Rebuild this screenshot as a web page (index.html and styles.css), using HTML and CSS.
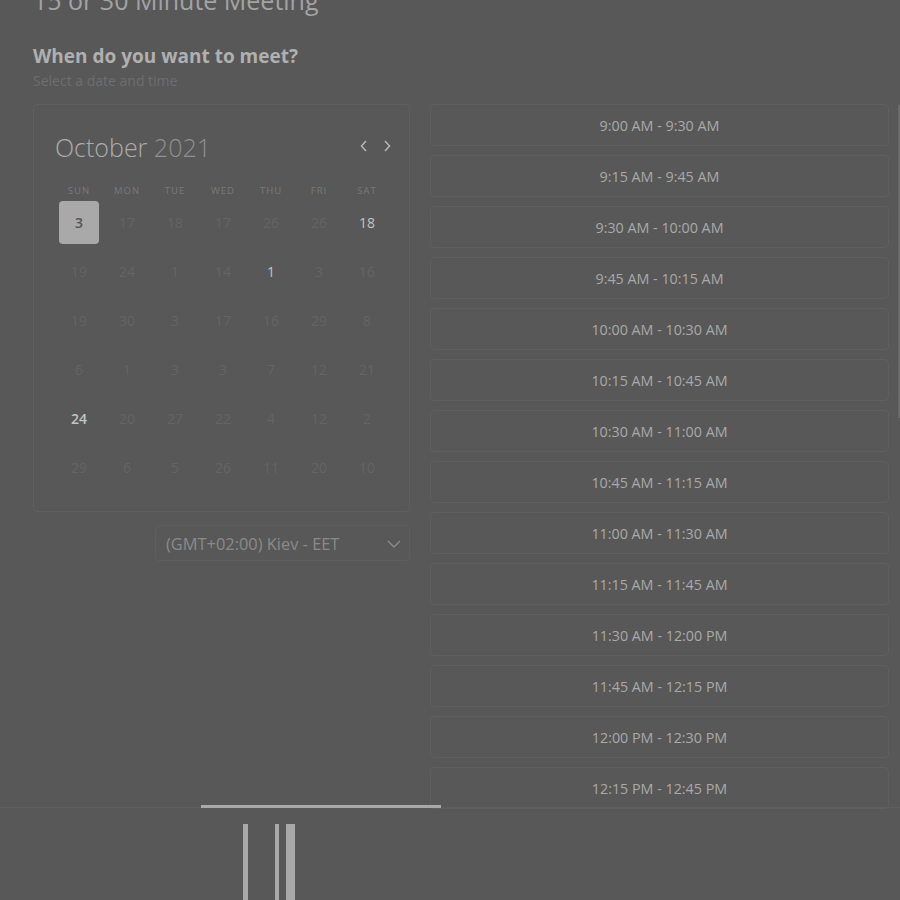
FILE: index.html
```html
<!DOCTYPE html>
<html>
<head>
<meta charset="utf-8">
<link rel="stylesheet" href="styles.css">
</head>
<body>
<div class="page">
  <h1 class="title">15 or 30 Minute Meeting</h1>
  <h2 class="question">When do you want to meet?</h2>
  <p class="hint">Select a date and time</p>
  <div class="main">
    <div class="left">
      <div class="calendar">
        <div class="cal-head">
          <div class="month"><span class="m">October</span> <span class="y">2021</span></div>
          <div class="nav">
            <svg width="10" height="14" viewBox="0 0 10 14"><path d="M7 2 L2.5 7 L7 12" fill="none" stroke="#b4b4b4" stroke-width="1.6"/></svg>
            <svg width="10" height="14" viewBox="0 0 10 14"><path d="M3 2 L7.5 7 L3 12" fill="none" stroke="#b4b4b4" stroke-width="1.6"/></svg>
          </div>
        </div>
        <div class="weekdays">
          <span>SUN</span><span>MON</span><span>TUE</span><span>WED</span><span>THU</span><span>FRI</span><span>SAT</span>
        </div>
        <div class="days">
          <span class="day sel">3</span><span class="day">17</span><span class="day">18</span><span class="day">17</span><span class="day">26</span><span class="day">26</span><span class="day on">18</span>
          <span class="day">19</span><span class="day">24</span><span class="day">1</span><span class="day">14</span><span class="day on">1</span><span class="day">3</span><span class="day">16</span>
          <span class="day">19</span><span class="day">30</span><span class="day">3</span><span class="day">17</span><span class="day">16</span><span class="day">29</span><span class="day">8</span>
          <span class="day">6</span><span class="day">1</span><span class="day">3</span><span class="day">3</span><span class="day">7</span><span class="day">12</span><span class="day">21</span>
          <span class="day on b">24</span><span class="day">20</span><span class="day">27</span><span class="day">22</span><span class="day">4</span><span class="day">12</span><span class="day">2</span>
          <span class="day">29</span><span class="day">6</span><span class="day">5</span><span class="day">26</span><span class="day">11</span><span class="day">20</span><span class="day">10</span>
        </div>
      </div>
      <div class="tz">
        <span>(GMT+02:00) Kiev - EET</span>
        <svg width="14" height="8" viewBox="0 0 14 8"><path d="M1 1 L7 7 L13 1" fill="none" stroke="#8a8a8a" stroke-width="1.4"/></svg>
      </div>
    </div>
    <div class="slots">
      <div class="slot">9:00 AM - 9:30 AM</div>
      <div class="slot">9:15 AM - 9:45 AM</div>
      <div class="slot">9:30 AM - 10:00 AM</div>
      <div class="slot">9:45 AM - 10:15 AM</div>
      <div class="slot">10:00 AM - 10:30 AM</div>
      <div class="slot">10:15 AM - 10:45 AM</div>
      <div class="slot">10:30 AM - 11:00 AM</div>
      <div class="slot">10:45 AM - 11:15 AM</div>
      <div class="slot">11:00 AM - 11:30 AM</div>
      <div class="slot">11:15 AM - 11:45 AM</div>
      <div class="slot">11:30 AM - 12:00 PM</div>
      <div class="slot">11:45 AM - 12:15 PM</div>
      <div class="slot">12:00 PM - 12:30 PM</div>
      <div class="slot">12:15 PM - 12:45 PM</div>
    </div>
  </div>
  <div class="scrollbar"></div>
  <div class="footer">
    <div class="hbar"></div>
    <div class="vbars">
      <div class="vb vb1"></div>
      <div class="vb vb2"></div>
      <div class="vb vb3"></div>
    </div>
  </div>
</div>
</body>
</html>
```

FILE: styles.css
```css
* { box-sizing: border-box; }
html, body { margin: 0; padding: 0; background: #585858; }
body {
  width: 900px;
  height: 900px;
  overflow: hidden;
  font-family: "Open Sans", "Noto Sans", sans-serif;
  color: #a8a8a8;
}
.page { position: relative; display: flow-root; height: 900px; padding-left: 33px; }
.title {
  margin: -19px 0 0 0;
  font-size: 25px;
  line-height: 38px;
  font-weight: 400;
  color: #a3a3a3;
}
.question {
  margin: 24px 0 0 0;
  font-size: 19px;
  line-height: 26px;
  font-weight: 700;
  color: #b0b0b0;
}
.hint {
  margin: 0;
  font-size: 14px;
  line-height: 24px;
  color: #6e6e6e;
}
.main {
  display: grid;
  grid-template-columns: 377px 459px;
  column-gap: 20px;
  margin-top: 11px;
}
.left { display: flex; flex-direction: column; align-items: flex-end; }
.calendar {
  width: 377px;
  height: 408px;
  border: 1px solid #5f5f5f;
  border-radius: 4px;
  padding: 0 17px 0 21px;
}
.cal-head {
  display: flex;
  justify-content: space-between;
  align-items: center;
  padding-top: 27px;
  padding-left: 0;
  height: 57px;
}
.month { font-size: 25px; line-height: 30px; font-weight: 300; }
.month .m { color: #acacac; }
.month .y { color: #909090; }
.nav { display: flex; gap: 13px; margin-right: 0; margin-top: -2px; }
.nav svg { display: block; }
.weekdays {
  display: grid;
  grid-template-columns: repeat(7, 48px);
  margin-top: 21px;
  height: 16px;
}
.weekdays span {
  text-align: center;
  font-size: 9.5px;
  line-height: 16px;
  letter-spacing: 1px;
  color: #787878;
}
.days {
  display: grid;
  grid-template-columns: repeat(7, 48px);
  grid-auto-rows: 49px;
  margin-top: -1px;
}
.day {
  display: flex;
  align-items: center;
  justify-content: center;
  font-size: 14px;
  color: #646464;
}
.day.on { color: #c4c4c4; }
.day.b { font-weight: 600; }
.day.sel {
  width: 40px;
  height: 43px;
  margin: 3px 0 0 4px;
  background: #a9a9a9;
  border-radius: 4px;
  color: #555;
  font-weight: 600;
}
.tz {
  width: 255px;
  height: 36px;
  margin-top: 13px;
  border: 1px solid #5e5e5e;
  border-radius: 4px;
  display: flex;
  align-items: center;
  justify-content: space-between;
  padding: 0 8px 0 10px;
  font-size: 16.4px;
  color: #8a8a8a;
}
.tz svg { display: block; margin-top: 2px; }
.slots { display: flex; flex-direction: column; gap: 9px; }
.slot {
  height: 42px;
  border: 1px solid #5f5f5f;
  border-radius: 4px;
  display: flex;
  align-items: center;
  justify-content: center;
  font-size: 14.3px;
  color: #a9a9a9;
}
.scrollbar {
  position: absolute;
  right: 0;
  top: 105px;
  width: 2px;
  height: 313px;
  background: #6a6a6a;
}
.footer {
  position: absolute;
  left: 0;
  top: 807px;
  width: 900px;
  height: 93px;
  border-top: 1px solid #5e5e5e;
}
.hbar {
  position: absolute;
  left: 201px;
  top: -3px;
  width: 240px;
  height: 3px;
  background: #a9a9a9;
}
.vbars { position: absolute; left: 0; top: 16px; width: 900px; height: 80px; }
.vb { position: absolute; top: 0; bottom: 0; background: #a9a9a9; }
.vb1 { left: 243px; width: 5px; }
.vb2 { left: 275px; width: 4px; }
.vb3 { left: 286px; width: 9px; }
```
